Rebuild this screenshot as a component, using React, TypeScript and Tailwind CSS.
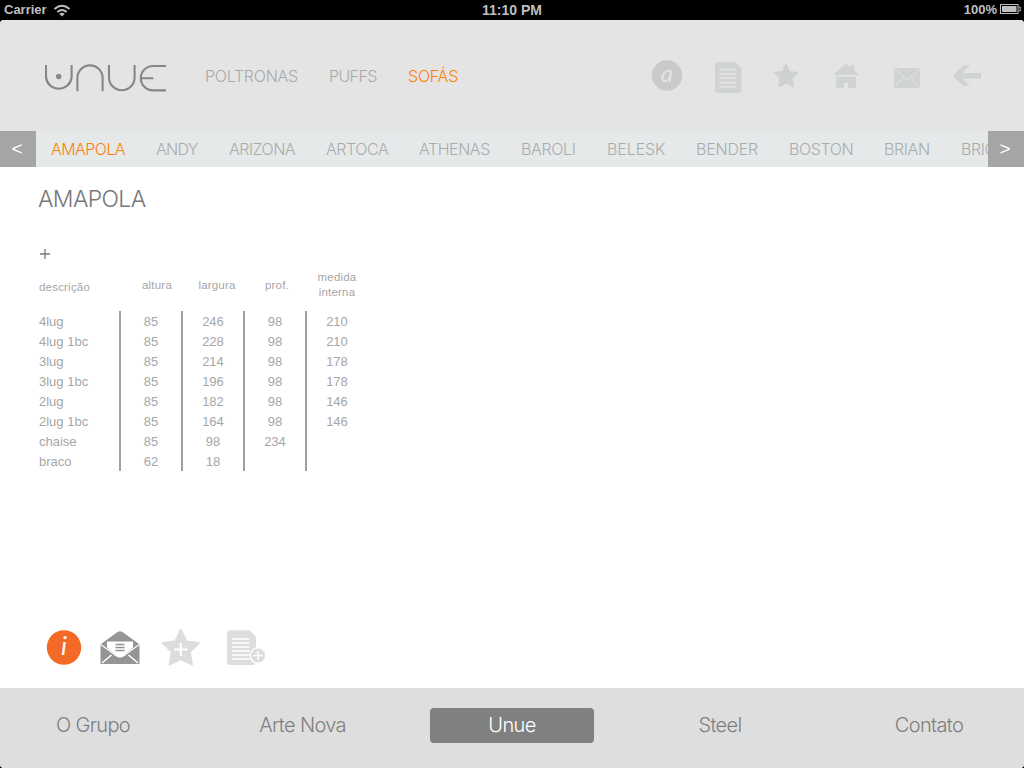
import React from "react";

const light = "font-['Inter','Liberation_Sans',sans-serif] font-light";

const tabs = [
  { name: "AMAPOLA", box: "w-[105px] tracking-[-0.55px]" },
  { name: "ANDY", box: "w-[73px] tracking-[-0.7px]" },
  { name: "ARIZONA", box: "w-[97px] tracking-[-0.5px]" },
  { name: "ARTOCA", box: "w-[93px] tracking-[-0.45px]" },
  { name: "ATHENAS", box: "w-[102px] tracking-[-0.45px]" },
  { name: "BAROLI", box: "w-[86px] tracking-[-0.35px]" },
  { name: "BELESK", box: "w-[89px] tracking-[-0.1px]" },
  { name: "BENDER", box: "w-[93px] tracking-[-0.2px]" },
  { name: "BOSTON", box: "w-[95px] tracking-[-0.4px]" },
  { name: "BRIAN", box: "w-[77px] tracking-[-0.4px]" },
  { name: "BRIC", box: "w-[60px] tracking-[-0.4px]" },
];

const rows = [
  ["4lug", "85", "246", "98", "210"],
  ["4lug 1bc", "85", "228", "98", "210"],
  ["3lug", "85", "214", "98", "178"],
  ["3lug 1bc", "85", "196", "98", "178"],
  ["2lug", "85", "182", "98", "146"],
  ["2lug 1bc", "85", "164", "98", "146"],
  ["chaise", "85", "98", "234", ""],
  ["braco", "62", "18", "", ""],
];

const star = "M0,-12.2 L3.7,-4.4 L12,-3.5 L6,2.4 L7.4,10.8 L0,7.2 L-7.4,10.8 L-6,2.4 L-12,-3.5 L-3.7,-4.4 Z";

function StatusBar() {
  return (
    <div className="grid h-5 grid-cols-3 items-center bg-black text-[13px] leading-5 font-bold text-[#bfbfbf]">
      <div className="flex items-center gap-[7px] pl-1">
        <span>Carrier</span>
        <svg width="18" height="13" viewBox="0 0 18 13" fill="none" stroke="#bfbfbf" strokeWidth="2" className="-ml-px">
          <path d="M1.5 5 Q9 -1.4 16.5 5" />
          <path d="M4.4 8 Q9 4 13.6 8" />
          <path d="M9 12.5 L6.3 9.8 Q9 7.8 11.7 9.8 Z" fill="#bfbfbf" stroke="none" />
        </svg>
      </div>
      <div className="text-center text-[14px]">11:10 PM</div>
      <div className="flex items-center justify-end gap-[3px] pr-[3px]">
        <span>100%</span>
        <svg width="21" height="10" viewBox="0 0 21 10" className="-mt-[2px]">
          <rect x="0.5" y="0.5" width="17.5" height="9" fill="none" stroke="#bfbfbf" />
          <rect x="2" y="2" width="14.5" height="6" fill="#bfbfc4" />
          <path d="M18.5 3 H20.2 V7 H18.5" fill="none" stroke="#bfbfbf" />
        </svg>
      </div>
    </div>
  );
}

function Logo() {
  return (
    <svg width="123" height="28" viewBox="45 64 123 28" fill="none" stroke="#868686" strokeWidth="2.1" className="mt-[2px] shrink-0">
      <path d="M46 65 V77.5 A12.9 12.9 0 0 0 71.6 77.5 V65" />
      <path d="M77.4 91.3 V78 A12.6 12.6 0 0 1 102.6 78 V91.3" />
      <path d="M109 65 V77.5 A12.8 12.8 0 0 0 134.6 77.5 V65" />
      <path d="M166 66 H153 A12.2 12.2 0 0 0 153 90.4 H166 M141 78.2 H153.3" />
      <circle cx="58.7" cy="76.5" r="2.7" fill="#868686" stroke="none" />
    </svg>
  );
}

function HeaderIcons() {
  return (
    <svg width="334" height="40" viewBox="650 57 334 40" className="shrink-0">
      <circle cx="667" cy="75.5" r="15.2" fill="#c9cacc" />
      <text x="666.8" y="82" textAnchor="middle" fontSize="24" fontStyle="italic" fontWeight="400" fontFamily="Lato" fill="#e4e4e4">a</text>
      <path d="M718 62 H735 L741.5 68.5 V90 Q741.5 93 738.5 93 H718 Q715 93 715 90 V65 Q715 62 718 62 Z" fill="#d0d3d3" />
      <path d="M719.5 69.5 H736 M719.5 73.8 H736 M719.5 78.2 H736 M719.5 82.6 H736 M719.5 87 H736" stroke="#e4e4e4" strokeWidth="1.7" />
      <path d={star} transform="translate(786 76)" fill="#ced1d1" stroke="#ced1d1" strokeWidth="1" strokeLinejoin="round" />
      <g fill="#d0d3d3">
        <path d="M833 75 L846 63.3 L851 67.5 V65 H854.2 V70.3 L859 75 Z" />
        <path d="M836 76.5 H856 V88 H848 V83 H844 V88 H836 Z" />
        <path d="M894 68 H920 V88 H894 Z" />
      </g>
      <path d="M894 68.5 L907 80 L920 68.5 M894 87.5 L903.5 77 M920 87.5 L910.5 77" stroke="#e4e4e4" strokeWidth="1" fill="none" />
      <path d="M953 75.7 L963 65.3 H970 L962.5 73 H981 V78.5 H962.5 L970 86 H963 Z" fill="#d0d3d3" />
    </svg>
  );
}

function ActionIcons() {
  return (
    <svg width="222" height="44" viewBox="45 625 222 44">
      <circle cx="64" cy="647.5" r="17.2" fill="#f26a25" />
      <text x="64" y="654.5" textAnchor="middle" fontSize="26" fontStyle="italic" fontWeight="400" fontFamily="Lato" fill="#fff">i</text>
      <path d="M101 644 L117.5 632 Q120 630.3 122.5 632 L139 644 L139.5 645 V664 H100.5 V645 Z" fill="#959595" />
      <path d="M107 641.5 H133 V647.5 L124 655.5 Q120 658.5 116 655.5 L107 647.5 Z" fill="#fff" />
      <path d="M100 644 L116 655.5 Q120 658.5 124 655.5 L140 644" fill="none" stroke="#fff" strokeWidth="1.2" />
      <path d="M102 663 L111.5 655 M138 663 L128.5 655" stroke="#fff" strokeWidth="1.6" />
      <path d="M115.5 644.5 H124.5 M115.5 647.5 H124.5 M115.5 650.5 H124.5" stroke="#959595" strokeWidth="1.3" />
      <path d={star} transform="translate(180.8 648.2) scale(1.52)" fill="#dcdddf" stroke="#dcdddf" strokeWidth="1.2" strokeLinejoin="round" />
      <path d="M174 649.5 H187.5 M180.8 643 V656" stroke="#fff" strokeWidth="2.2" />
      <path d="M230 630.3 H249.5 L256 637 V662 Q256 665 253 665 H230 Q227 665 227 662 V633.3 Q227 630.3 230 630.3 Z" fill="#dcdddf" />
      <path d="M232 639 H249.5 M232 643 H249.5 M232 647 H249.5 M232 651 H249.5 M232 655 H249.5 M232 659 H249.5" stroke="#fff" strokeWidth="1.4" />
      <circle cx="258" cy="655.5" r="7.7" fill="#dcdddf" stroke="#fff" strokeWidth="1.4" />
      <path d="M253.5 655.5 H262.5 M258 651 V660" stroke="#fff" strokeWidth="1.5" />
    </svg>
  );
}

export default function App() {
  return (
    <div className="h-[768px] w-[1024px] overflow-hidden bg-black font-['Liberation_Sans',sans-serif]">
      <StatusBar />
      <div className="flex h-[748px] flex-col overflow-hidden rounded-[4px] bg-white">
        <header className={`flex h-[111px] items-center bg-[#e4e4e4] pt-[2px] pl-[45px] text-[16px] text-[#a9a9a9] ${light}`}>
          <Logo />
          <nav className="-mt-px ml-[37px] flex w-[443px] whitespace-nowrap">
            <span className="w-[124px] tracking-[-0.25px]">POLTRONAS</span>
            <span className="w-[79px] tracking-[-0.6px]">PUFFS</span>
            <span className="tracking-[-0.2px] text-[#ff8000]">SOFÁS</span>
          </nav>
          <div className="ml-[2px] flex">
            <HeaderIcons />
          </div>
        </header>
        <div className="flex h-9 bg-[#e5e9ea]">
          <button className="w-9 shrink-0 bg-[#a5a5a5] pr-[2px] text-[19px] leading-9 text-white">&lt;</button>
          <div className={`flex w-[952px] overflow-hidden pl-[15px] text-[16px] leading-[37px] whitespace-nowrap text-[#aaacac] ${light}`}>
            {tabs.map((t, i) => (
              <span key={t.name} className={`${t.box} shrink-0 ${i === 0 ? "text-[#ff8000]" : ""}`}>{t.name}</span>
            ))}
          </div>
          <button className="w-9 shrink-0 bg-[#a5a5a5] pr-[2px] text-[19px] leading-9 text-white">&gt;</button>
        </div>
        <main className="flex h-[521px] flex-col pl-[39px] text-[#a6a6a6]">
          <h1 className={`mt-[16px] -ml-px h-8 text-[23px] leading-8 tracking-[-0.65px] text-[#777] ${light}`}>AMAPOLA</h1>
          <div className="mt-[33px] flex h-3 items-center">
            <svg width="12" height="12" viewBox="0 0 12 12" stroke="#7a7a7a" strokeWidth="1.3">
              <path d="M1 6 H11 M6 1 V11" />
            </svg>
          </div>
          <div className="mt-[10px] flex h-[41px] text-[11.5px] leading-[15px] tracking-[0.2px]">
            <span className="w-[87px] pt-[10px]">descrição</span>
            <span className="w-[62px] pt-[8px] text-center">altura</span>
            <span className="w-[58px] pt-[8px] text-center">largura</span>
            <span className="w-[62px] pt-[8px] text-center">prof.</span>
            <span className="w-[58px] text-center">medida<br />interna</span>
          </div>
          <div className="flex w-[330px] flex-col text-[13px] leading-[22px]">
            {rows.map((r) => (
              <div key={r[0]} className="flex h-5">
                <span className="w-20">{r[0]}</span>
                {r.slice(1).map((v, i) => (
                  <span key={i} className="h-5 w-[62px] border-l-2 border-[#a0a0a0] text-center">{v}</span>
                ))}
              </div>
            ))}
          </div>
          <div className="mt-[154px] ml-[6px]">
            <ActionIcons />
          </div>
        </main>
        <footer className={`grid h-20 grid-cols-[186px_233px_187px_228px_190px] items-start bg-[#dedede] pt-5 text-center text-[20px] leading-[35px] tracking-[-0.65px] text-[#7f7f7f] ${light}`}>
          <span>O Grupo</span>
          <span>Arte Nova</span>
          <span className="mr-3 ml-[11px] h-[35px] rounded-[4px] bg-[#808080] text-white">Unue</span>
          <span>Steel</span>
          <span>Contato</span>
        </footer>
      </div>
    </div>
  );
}
